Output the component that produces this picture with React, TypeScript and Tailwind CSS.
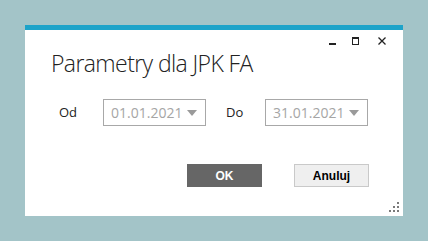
import React from 'react';

const DateCombo = ({ value }: { value: string }) => (
  <div className="flex items-center justify-between w-[103px] h-[27px] border border-[#a8a8a8] pl-[7px] pr-[8px]">
    <span className="text-[14px] text-[#a5a5a5] leading-none">{value}</span>
    <svg width="10" height="6" viewBox="0 0 10 6">
      <path d="M0 0 H10 L5 6 Z" fill="#9a9a9a" />
    </svg>
  </div>
);

const Grip = () => (
  <svg width="10" height="10" viewBox="0 0 10 10">
    {[
      [8, 0],
      [4, 4], [8, 4],
      [0, 8], [4, 8], [8, 8],
    ].map(([x, y]) => (
      <rect key={`${x}-${y}`} x={x} y={y} width="2" height="2" fill="#7a7a7a" />
    ))}
  </svg>
);

export default function App() {
  return (
    <div className="w-[428px] h-[241px] bg-[#a3c4c8] pt-[25px] pl-[25px] font-['Open_Sans',sans-serif]">
      <div className="relative w-[378px] h-[191px] bg-white border-t-[5px] border-[#1da3c9] flex flex-col">
        {/* window controls */}
        <div className="flex justify-end items-start pr-[17px] pt-[7px] h-[15px]">
          <span className="block w-[7px] h-[2px] bg-[#222] mt-[6px]" />
          <span className="block w-[7px] h-[8px] border border-[#222] border-t-2 ml-[16px]" />
          <svg width="8" height="8" viewBox="0 0 8 8" className="ml-[19px]">
            <path d="M0.5 0.5 L7.5 7.5 M7.5 0.5 L0.5 7.5" stroke="#222" strokeWidth="1.3" />
          </svg>
        </div>

        <h1 className="pl-[26px] mt-[3px] text-[23px] font-light text-[#222] leading-[30px] tracking-[-0.6px]">
          Parametry dla JPK FA
        </h1>

        <div className="flex items-center mt-[21px] pl-[34px] text-[13px] text-[#222]">
          <span className="w-[44px]">Od</span>
          <DateCombo value="01.01.2021" />
          <span className="w-[39px] pl-[20px] box-content">Do</span>
          <DateCombo value="31.01.2021" />
        </div>

        <div className="flex justify-end gap-[32px] pr-[34px] mt-[38px] font-['Liberation_Sans',sans-serif] font-bold text-[12px]">
          <button className="w-[75px] h-[23px] bg-[#666666] text-white">OK</button>
          <button className="w-[75px] h-[23px] bg-[#efefef] border border-[#c9c9c9] text-black">Anuluj</button>
        </div>

        <div className="absolute right-[4px] bottom-[4px]">
          <Grip />
        </div>
      </div>
    </div>
  );
}
